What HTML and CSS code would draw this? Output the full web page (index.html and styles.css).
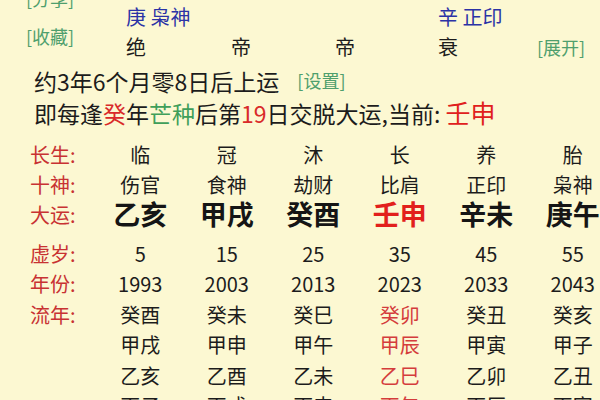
FILE: index.html
```html
<!DOCTYPE html>
<html lang="zh">
<head>
<meta charset="utf-8">
<link rel="stylesheet" href="styles.css">
</head>
<body>
<div class="page">
  <div class="top">
    <div class="side">
      <span class="link">[分享]</span>
      <span class="link">[收藏]</span>
    </div>
    <div class="pillars">
      <span class="blue">庚 枭神</span>
      <span></span>
      <span></span>
      <span class="blue">辛 正印</span>
      <span></span>
      <span>绝</span>
      <span>帝</span>
      <span>帝</span>
      <span>衰</span>
      <span class="link expand">[展开]</span>
    </div>
  </div>
  <div class="line1">约3年6个月零8日后上运<span class="link setting">[设置]</span></div>
  <div class="line2">即每逢<span class="red">癸</span>年<span class="green">芒种</span>后第<span class="red">19</span>日交脱大运,当前: <span class="now">壬申</span></div>

  <div class="table">
    <div class="label">长生:</div>
    <div class="cell">临</div><div class="cell">冠</div><div class="cell">沐</div><div class="cell">长</div><div class="cell">养</div><div class="cell">胎</div>

    <div class="label">十神:</div>
    <div class="cell">伤官</div><div class="cell">食神</div><div class="cell">劫财</div><div class="cell">比肩</div><div class="cell">正印</div><div class="cell">枭神</div>

    <div class="label">大运:</div>
    <div class="cell big">乙亥</div><div class="cell big">甲戌</div><div class="cell big">癸酉</div><div class="cell big cur">壬申</div><div class="cell big">辛未</div><div class="cell big">庚午</div>

    <div class="label gap">虚岁:</div>
    <div class="cell gap">5</div><div class="cell gap">15</div><div class="cell gap">25</div><div class="cell gap">35</div><div class="cell gap">45</div><div class="cell gap">55</div>

    <div class="label">年份:</div>
    <div class="cell">1993</div><div class="cell">2003</div><div class="cell">2013</div><div class="cell">2023</div><div class="cell">2033</div><div class="cell">2043</div>

    <div class="label">流年:</div>
    <div class="cell">癸酉</div><div class="cell">癸未</div><div class="cell">癸巳</div><div class="cell hl">癸卯</div><div class="cell">癸丑</div><div class="cell">癸亥</div>

    <div class="label"></div>
    <div class="cell">甲戌</div><div class="cell">甲申</div><div class="cell">甲午</div><div class="cell hl">甲辰</div><div class="cell">甲寅</div><div class="cell">甲子</div>

    <div class="label"></div>
    <div class="cell">乙亥</div><div class="cell">乙酉</div><div class="cell">乙未</div><div class="cell hl">乙巳</div><div class="cell">乙卯</div><div class="cell">乙丑</div>

    <div class="label"></div>
    <div class="cell">丙子</div><div class="cell">丙戌</div><div class="cell">丙申</div><div class="cell hl">丙午</div><div class="cell">丙辰</div><div class="cell">丙寅</div>
  </div>
</div>
</body>
</html>
```

FILE: styles.css
```css
html, body {
  margin: 0;
  padding: 0;
  width: 600px;
  height: 400px;
  overflow: hidden;
  background: #fcf8d2;
}

body {
  font-family: "Noto Sans CJK SC", "Noto Sans", sans-serif;
  color: #1c1c1c;
}

.page {
  width: 640px;
}

.top {
  display: flex;
  height: 62px;
}

.side {
  width: 100px;
  padding-left: 26px;
  margin-top: -21px;
  display: flex;
  flex-direction: column;
}

.link {
  color: #4f9f6d;
  font-size: 18px;
  line-height: 38px;
}

.pillars {
  display: grid;
  grid-template-columns: 105px 104px 103px 99px auto;
  grid-auto-rows: 30px;
  padding-top: 2px;
  font-size: 20px;
  line-height: 30px;
}

.blue {
  color: #2b33a6;
}

.pillars .expand {
  line-height: 30px;
}

.line1 {
  margin-top: 4px;
  padding-left: 34px;
  font-size: 23px;
  line-height: 31px;
}

.line1 .setting {
  margin-left: 18px;
  line-height: 31px;
  vertical-align: top;
  position: relative;
  top: -1px;
}

.line2 {
  padding-left: 34px;
  font-size: 23px;
  line-height: 30px;
}

.red {
  color: #d92a2a;
}

.green {
  color: #3f9f5a;
}

.now {
  color: #e0201c;
  font-size: 25px;
}

.table {
  margin-top: 12px;
  margin-left: 30px;
  display: grid;
  grid-template-columns: 67px repeat(6, 86.5px);
  grid-template-rows: 30px 30px 32px 37px repeat(5, 30.5px);
  line-height: 30px;
  font-size: 20px;
}

.label {
  color: #c83232;
  font-size: 20px;
}

.cell {
  text-align: center;
}

.big {
  font-size: 27px;
  font-weight: bold;
  line-height: 28px;
  color: #151515;
}

.cur {
  color: #e2201c;
}

.hl {
  color: #d43c3c;
}

.gap {
  align-self: end;
}
```
